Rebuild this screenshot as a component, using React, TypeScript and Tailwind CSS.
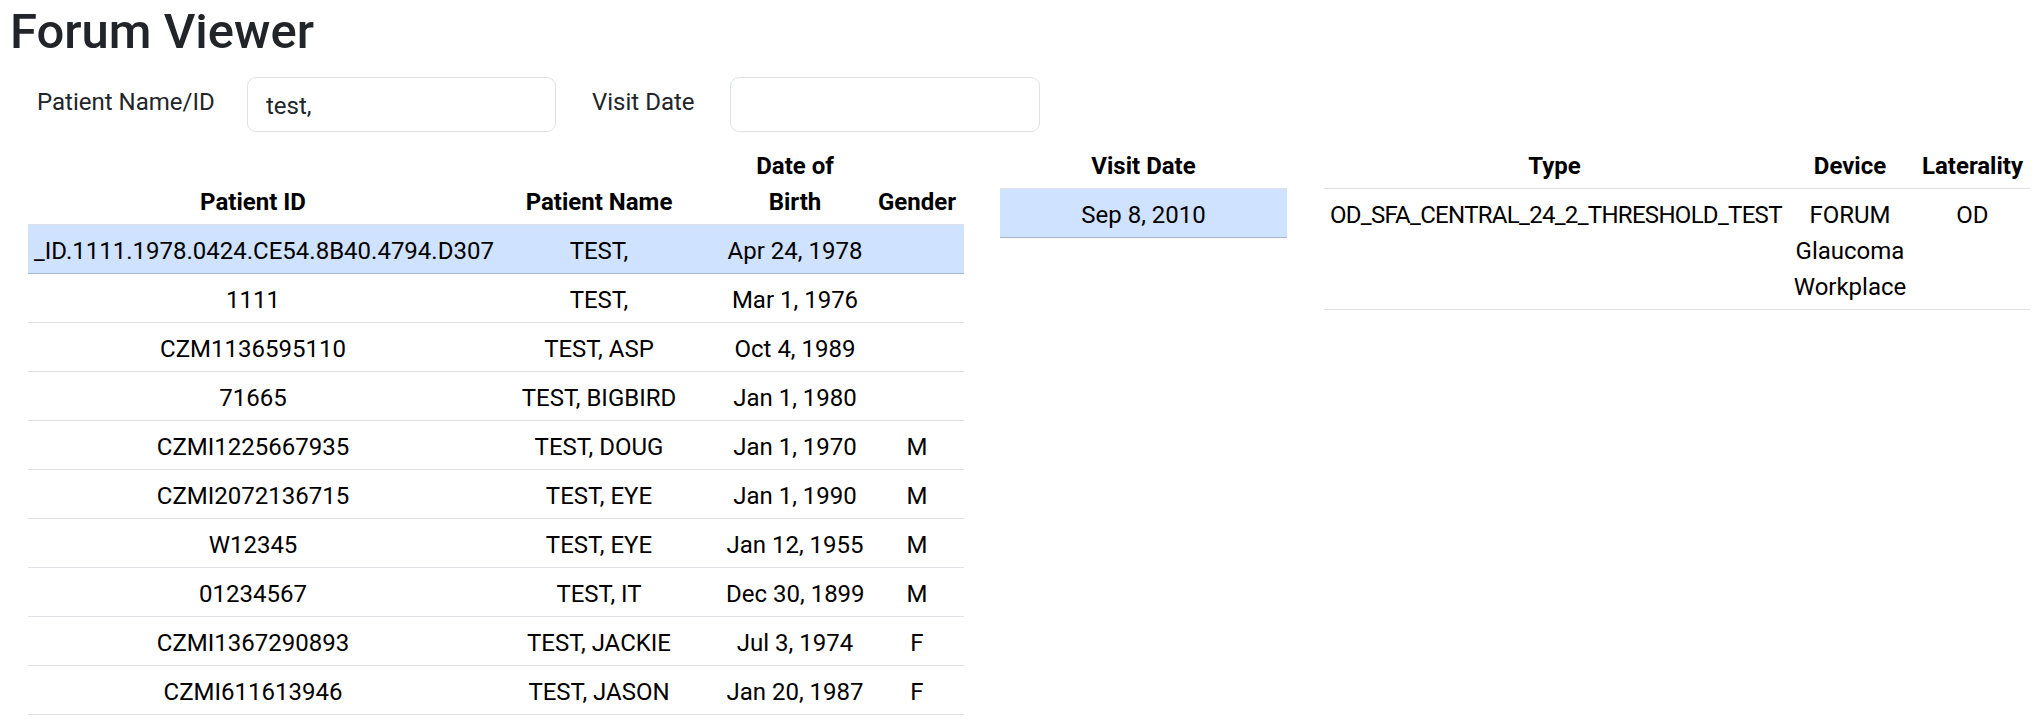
import React from "react";

type Patient = { id: string; name: string; dob: string; gender: string };

const patients: Patient[] = [
  { id: "_ID.1111.1978.0424.CE54.8B40.4794.D307", name: "TEST,", dob: "Apr 24, 1978", gender: "" },
  { id: "1111", name: "TEST,", dob: "Mar 1, 1976", gender: "" },
  { id: "CZM1136595110", name: "TEST, ASP", dob: "Oct 4, 1989", gender: "" },
  { id: "71665", name: "TEST, BIGBIRD", dob: "Jan 1, 1980", gender: "" },
  { id: "CZMI1225667935", name: "TEST, DOUG", dob: "Jan 1, 1970", gender: "M" },
  { id: "CZMI2072136715", name: "TEST, EYE", dob: "Jan 1, 1990", gender: "M" },
  { id: "W12345", name: "TEST, EYE", dob: "Jan 12, 1955", gender: "M" },
  { id: "01234567", name: "TEST, IT", dob: "Dec 30, 1899", gender: "M" },
  { id: "CZMI1367290893", name: "TEST, JACKIE", dob: "Jul 3, 1974", gender: "F" },
  { id: "CZMI611613946", name: "TEST, JASON", dob: "Jan 20, 1987", gender: "F" },
];

const th = "px-[6px] pt-[8px] pb-[4px] font-bold text-center align-bottom border-b border-[#dee2e6]";
const td = "px-[6px] pt-[8px] pb-[4px] text-center align-top border-b";

export default function App() {
  return (
    <div className="min-h-screen bg-white text-[#212529] font-['Roboto',sans-serif] text-[24px] leading-[36px]">
      <div className="pl-[10px] pt-[3px]">
        <h2 className="text-[49px] leading-[57.6px] font-medium">Forum Viewer</h2>

        {/* Search form */}
        <div className="flex items-start mt-[16px] pl-[27px]">
          <label className="w-[210px] mt-[7px] shrink-0">Patient Name/ID</label>
          <input
            readOnly
            value="test,"
            className="w-[309px] h-[55px] px-[18px] pt-[4px] pb-0 border border-[#dee2e6] rounded-[9px] outline-none text-[#212529] bg-white"
          />
          <label className="w-[138px] ml-[36px] mt-[7px] shrink-0">Visit Date</label>
          <input
            readOnly
            value=""
            className="w-[310px] h-[55px] px-[18px] pt-[4px] pb-0 border border-[#dee2e6] rounded-[9px] outline-none bg-white"
          />
        </div>
      </div>

      <div className="flex items-start mt-[8px] pl-[28px] text-black">
        {/* Patients */}
        <table className="table-fixed w-[936px] shrink-0">
          <colgroup>
            <col className="w-[450px]" />
            <col className="w-[242px]" />
            <col className="w-[150px]" />
            <col className="w-[94px]" />
          </colgroup>
          <thead>
            <tr>
              <th className={th}>Patient ID</th>
              <th className={th}>Patient Name</th>
              <th className={th}>
                Date of
                <br />
                Birth
              </th>
              <th className={th}>Gender</th>
            </tr>
          </thead>
          <tbody>
            {patients.map((p, i) => {
              const sel = i === 0;
              const cls = `${td} ${sel ? "bg-[#cfe2ff] border-[#a6b5cc]" : "border-[#dee2e6]"}`;
              return (
                <tr key={p.id}>
                  <td className={`${cls} whitespace-nowrap`}>{p.id}</td>
                  <td className={cls}>{p.name}</td>
                  <td className={`${cls} whitespace-nowrap`}>{p.dob}</td>
                  <td className={cls}>{p.gender}</td>
                </tr>
              );
            })}
          </tbody>
        </table>

        {/* Visits */}
        <table className="table-fixed w-[287px] ml-[36px] shrink-0">
          <thead>
            <tr>
              <th className={th}>Visit Date</th>
            </tr>
          </thead>
          <tbody>
            <tr>
              <td className={`${td} bg-[#cfe2ff] border-[#a6b5cc]`}>Sep 8, 2010</td>
            </tr>
          </tbody>
        </table>

        {/* Exams */}
        <table className="table-fixed w-[706px] ml-[37px] shrink-0">
          <colgroup>
            <col className="w-[461px]" />
            <col className="w-[130px]" />
            <col className="w-[115px]" />
          </colgroup>
          <thead>
            <tr>
              <th className={th}>Type</th>
              <th className={th}>Device</th>
              <th className={th}>Laterality</th>
            </tr>
          </thead>
          <tbody>
            <tr>
              <td className={`${td} border-[#dee2e6] whitespace-nowrap tracking-[-0.7px]`}>
                OD_SFA_CENTRAL_24_2_THRESHOLD_TEST
              </td>
              <td className={`${td} border-[#dee2e6]`}>FORUM Glaucoma Workplace</td>
              <td className={`${td} border-[#dee2e6]`}>OD</td>
            </tr>
          </tbody>
        </table>
      </div>
    </div>
  );
}
